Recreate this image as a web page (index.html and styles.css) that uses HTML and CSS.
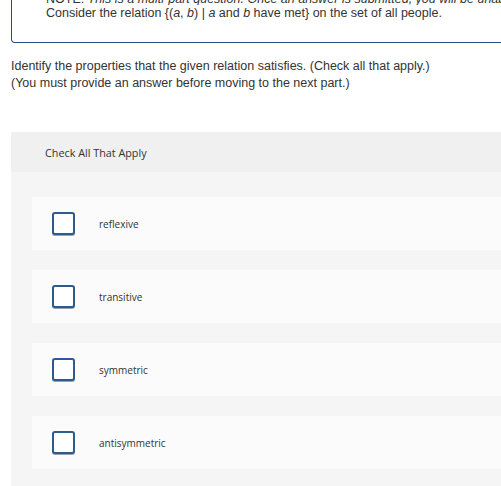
FILE: index.html
```html
<!DOCTYPE html>
<html>
<head>
<meta charset="utf-8">
<link rel="stylesheet" href="styles.css">
</head>
<body>
<div class="page">
  <div class="note-box">
    <p class="note">NOTE: <em>This is a multi-part question. Once an answer is submitted, you will be unable to return to this part.</em></p>
    <p class="question">Consider the relation {(<em>a</em>, <em>b</em>) | <em>a</em> and <em>b</em> have met} on the set of all people.</p>
  </div>
  <div class="instructions">
    <p>Identify the properties that the given relation satisfies. (Check all that apply.)</p>
    <p>(You must provide an answer before moving to the next part.)</p>
  </div>
  <div class="panel">
    <div class="panel-head">Check All That Apply</div>
    <div class="panel-body">
      <label class="option"><span class="box"></span><span class="label">reflexive</span></label>
      <label class="option"><span class="box"></span><span class="label">transitive</span></label>
      <label class="option"><span class="box"></span><span class="label">symmetric</span></label>
      <label class="option"><span class="box"></span><span class="label">antisymmetric</span></label>
    </div>
  </div>
</div>
</body>
</html>
```
FILE: styles.css
```css
html, body {
  margin: 0;
  padding: 0;
  background: #fff;
  overflow: hidden;
}
.page {
  font-family: "Liberation Sans", Arial, sans-serif;
  color: #333;
  padding-left: 11px;
}
p { margin: 0; }
.note-box {
  margin-top: -6px;
  margin-right: -20px;
  border: 1px solid #24508a;
  border-top: none;
  border-radius: 0 0 4px 4px;
  padding: 0 0 20px 34px;
  font-size: 12.5px;
  line-height: 17px;
}
.note {
  white-space: nowrap;
  overflow: hidden;
  line-height: 11px;
}
.instructions {
  margin-top: 15px;
  font-size: 12.5px;
  line-height: 17px;
}
.panel {
  margin-top: 40px;
  margin-right: -20px;
  background: #f5f5f5;
}
.panel-head {
  background: #f0f0f0;
  height: 40px;
  display: flex;
  align-items: center;
  padding-left: 34px;
  font-family: "Open Sans", sans-serif;
  font-size: 10.8px;
  color: #333;
}
.panel-body {
  padding: 25px 0 30px 21px;
  display: flex;
  flex-direction: column;
  gap: 20px;
}
.option {
  display: flex;
  align-items: center;
  height: 53px;
  background: #fbfbfb;
  padding-left: 20px;
}
.box {
  width: 19px;
  height: 19px;
  border: 2px solid #2c5b92;
  border-radius: 3px;
  background: #fff;
  box-shadow: 0 1px 0 #9aa0a8;
  flex: none;
}
.label {
  margin-left: 24px;
  font-family: "Open Sans", sans-serif;
  font-size: 10px;
  color: #333;
}
```
